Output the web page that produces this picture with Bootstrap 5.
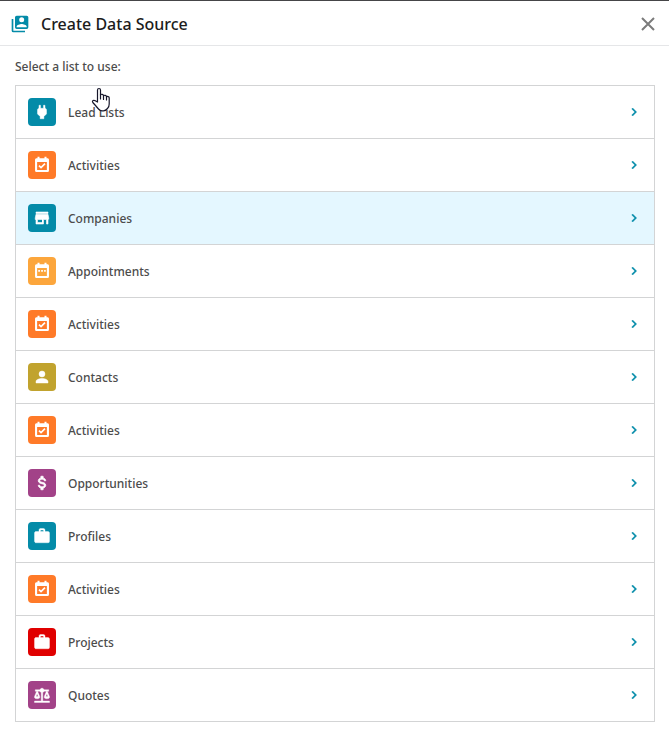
<!DOCTYPE html>
<html lang="en">
<head>
<meta charset="utf-8">
<meta name="viewport" content="width=device-width, initial-scale=1">
<title>Create Data Source</title>
<link href="https://cdn.jsdelivr.net/npm/bootstrap@5.3.0/dist/css/bootstrap.min.css" rel="stylesheet">
<style>
  body { font-family: "Noto Sans", sans-serif; font-size: 12px; font-weight: 500; line-height: 20px; color: #4c4c4c; background: #fff; }
  .dialog-head { border-top: 1px solid #454547; border-bottom: 1px solid #e5e6e8; padding: 1px 9px 0 10px; height: 46px; }
  .dialog-head h1 { font-size: 16px; line-height: 24px; font-weight: 500; color: #1c1c1c; margin-left: 11px; }
  .teal { color: #048ba8; }
  .dialog-close { width: 24px; height: 24px; color: #7b7b7b; }
  .dialog-body { padding: 11px 14px 16px 15px; }
  .source-list { --bs-list-group-border-color: #d3d4d5; --bs-list-group-border-radius: 0; margin-top: 8px; }
  .source-list .list-group-item { padding: 12px; color: #4c4c4c; font-weight: 500; }
  .source-list .list-group-item.current, .source-list .list-group-item:hover { background: #e4f7ff; }
  .source-name { padding-top: 2px; }
  .tile { width: 28px; height: 28px; border-radius: 4px; color: #fff; margin-right: 12px; }
  svg { fill: currentColor; display: block; }
  .bg-teal { background: #048ba8; }
  .bg-orange { background: #ff7a28; }
  .bg-amber { background: #fca63c; }
  .bg-olive { background: #c1a32e; }
  .bg-plum { background: #a24288; }
  .bg-scarlet { background: #e00000; }
  .hand { left: 91px; top: 87px; z-index: 5; pointer-events: none; }
</style>
<script src="https://cdn.jsdelivr.net/npm/bootstrap@5.3.0/dist/js/bootstrap.bundle.min.js"></script>
</head>
<body class="position-relative">
<svg class="d-none" aria-hidden="true">
  <symbol id="plug" viewBox="0 0 24 24"><path d="M16,7V3H14V7H10V3H8V7H8C7,7 6,8 6,9V14.5L9.500,18V21H14.500V18L18,14.500V9C18,8 17,7 16,7Z" stroke="currentColor" stroke-width=".6"/></symbol>
  <symbol id="check" viewBox="0 0 24 24"><path fill-rule="evenodd" d="M5,3H6V1H8.700V3H15.300V1H18V3H19A2,2 0 0,1 21.300,5V19A2,2 0 0,1 19,21.300H5A2,2 0 0,1 2.700,19V5A2,2 0 0,1 5,3ZM5.500,8V18.500H18.500V8Z"/><path d="M8,12.800L10.700,15.500L16,10.200" fill="none" stroke="currentColor" stroke-width="2.200"/></symbol>
  <symbol id="range" viewBox="0 0 24 24"><path fill-rule="evenodd" d="M5,3H6V1H8.700V3H15.300V1H18V3H19A2,2 0 0,1 21.300,5V19A2,2 0 0,1 19,21.300H5A2,2 0 0,1 2.700,19V5A2,2 0 0,1 5,3ZM5.500,8V18.500H18.500V8Z"/><path d="M7,10.500H9.300V13H7ZM10.900,10.500H13.200V13H10.900ZM14.800,10.500H17V13H14.800Z"/></symbol>
  <symbol id="store" viewBox="0 0 24 24"><path d="M12,18H6V14H12M21,14V12L20,7H4L3,12V14H4V20H14V14H18V20H20V14M20,4H4V6H20V4Z" stroke="currentColor" stroke-width=".8"/></symbol>
  <symbol id="person" viewBox="0 0 24 24"><path d="M12,4A4,4 0 0,1 16,8A4,4 0 0,1 12,12A4,4 0 0,1 8,8A4,4 0 0,1 12,4M12,14C16.420,14 20,15.790 20,18V20H4V18C4,15.790 7.580,14 12,14Z" stroke="currentColor" stroke-width=".6"/></symbol>
  <symbol id="dollar" viewBox="0 0 24 24"><path d="M7,15H9C9,16.080 10.370,17 12,17C13.630,17 15,16.080 15,15C15,13.900 13.960,13.500 11.760,12.970C9.640,12.440 7,11.780 7,9C7,7.210 8.470,5.690 10.500,5.180V3H13.500V5.180C15.530,5.690 17,7.210 17,9H15C15,7.920 13.630,7 12,7C10.370,7 9,7.920 9,9C9,10.100 10.040,10.500 12.240,11.030C14.360,11.560 17,12.220 17,15C17,16.790 15.530,18.310 13.500,18.820V21H10.500V18.820C8.470,18.310 7,16.790 7,15Z" stroke="currentColor" stroke-width="1"/></symbol>
  <symbol id="case" viewBox="0 0 24 24"><path d="M10,2H14A2,2 0 0,1 16,4V6H20A2,2 0 0,1 22,8V19A2,2 0 0,1 20,21H4C2.890,21 2,20.100 2,19V8C2,6.890 2.890,6 4,6H8V4C8,2.890 8.890,2 10,2M14,6V4H10V6H14Z" stroke="currentColor" stroke-width=".5"/></symbol>
  <symbol id="scales" viewBox="0 0 24 24"><path d="M12,3C10.730,3 9.600,3.800 9.180,5H3V7H4.950L2,14C1.530,16 3,17 5.500,17C8,17 9.560,16 9,14L6.050,7H9.170C9.500,7.850 10.150,8.500 11,8.830V20H2V22H22V20H13V8.820C13.850,8.500 14.500,7.850 14.820,7H17.950L15,14C14.530,16 16,17 18.500,17C21,17 22.560,16 22,14L19.050,7H21V5H14.830C14.400,3.800 13.270,3 12,3M5.500,10.250L7,14H4L5.500,10.250M18.500,10.250L20,14H17L18.500,10.250Z" stroke="currentColor" stroke-width=".5"/></symbol>
  <symbol id="chev" viewBox="0 0 24 24"><path d="M8.590,16.580L13.170,12L8.590,7.410L10,6L16,12L10,18L8.590,16.580Z" stroke="currentColor" stroke-width=".6"/></symbol>
</svg>

<header class="dialog-head d-flex align-items-center">
  <svg class="teal flex-shrink-0" width="20" height="20" viewBox="0 0 24 24" aria-hidden="true"><path d="M4,6H2V20A2,2 0 0,0 4,22H18V20H4V6M20,2A2,2 0 0,1 22,4V16A2,2 0 0,1 20,18H8A2,2 0 0,1 6,16V4A2,2 0 0,1 8,2H20M17,7A3,3 0 0,0 14,4A3,3 0 0,0 11,7A3,3 0 0,0 14,10A3,3 0 0,0 17,7M8,15V16H20V15C20,13 16,11.900 14,11.900C12,11.900 8,13 8,15Z"/></svg>
  <h1 class="mb-0 me-auto">Create Data Source</h1>
  <button type="button" class="dialog-close btn p-0 border-0" aria-label="Close"><svg width="24" height="24" viewBox="0 0 24 24"><path d="M6 6L18 18M18 6L6 18" stroke="currentColor" stroke-width="2" fill="none"/></svg></button>
</header>

<main class="dialog-body">
  <p class="mb-0" id="prompt">Select a list to use:</p>
  <div class="list-group source-list" role="group" aria-labelledby="prompt">
    <button type="button" class="list-group-item list-group-item-action d-flex align-items-center"><span class="tile bg-teal d-flex align-items-center justify-content-center"><svg width="18" height="18"><use href="#plug"/></svg></span><span class="source-name me-auto">Lead Lists</span><svg class="teal" width="16" height="16"><use href="#chev"/></svg></button>
    <button type="button" class="list-group-item list-group-item-action d-flex align-items-center"><span class="tile bg-orange d-flex align-items-center justify-content-center"><svg width="18" height="18"><use href="#check"/></svg></span><span class="source-name me-auto">Activities</span><svg class="teal" width="16" height="16"><use href="#chev"/></svg></button>
    <button type="button" class="list-group-item list-group-item-action current d-flex align-items-center"><span class="tile bg-teal d-flex align-items-center justify-content-center"><svg width="18" height="18"><use href="#store"/></svg></span><span class="source-name me-auto">Companies</span><svg class="teal" width="16" height="16"><use href="#chev"/></svg></button>
    <button type="button" class="list-group-item list-group-item-action d-flex align-items-center"><span class="tile bg-amber d-flex align-items-center justify-content-center"><svg width="18" height="18"><use href="#range"/></svg></span><span class="source-name me-auto">Appointments</span><svg class="teal" width="16" height="16"><use href="#chev"/></svg></button>
    <button type="button" class="list-group-item list-group-item-action d-flex align-items-center"><span class="tile bg-orange d-flex align-items-center justify-content-center"><svg width="18" height="18"><use href="#check"/></svg></span><span class="source-name me-auto">Activities</span><svg class="teal" width="16" height="16"><use href="#chev"/></svg></button>
    <button type="button" class="list-group-item list-group-item-action d-flex align-items-center"><span class="tile bg-olive d-flex align-items-center justify-content-center"><svg width="18" height="18"><use href="#person"/></svg></span><span class="source-name me-auto">Contacts</span><svg class="teal" width="16" height="16"><use href="#chev"/></svg></button>
    <button type="button" class="list-group-item list-group-item-action d-flex align-items-center"><span class="tile bg-orange d-flex align-items-center justify-content-center"><svg width="18" height="18"><use href="#check"/></svg></span><span class="source-name me-auto">Activities</span><svg class="teal" width="16" height="16"><use href="#chev"/></svg></button>
    <button type="button" class="list-group-item list-group-item-action d-flex align-items-center"><span class="tile bg-plum d-flex align-items-center justify-content-center"><svg width="18" height="18"><use href="#dollar"/></svg></span><span class="source-name me-auto">Opportunities</span><svg class="teal" width="16" height="16"><use href="#chev"/></svg></button>
    <button type="button" class="list-group-item list-group-item-action d-flex align-items-center"><span class="tile bg-teal d-flex align-items-center justify-content-center"><svg width="18" height="18"><use href="#case"/></svg></span><span class="source-name me-auto">Profiles</span><svg class="teal" width="16" height="16"><use href="#chev"/></svg></button>
    <button type="button" class="list-group-item list-group-item-action d-flex align-items-center"><span class="tile bg-orange d-flex align-items-center justify-content-center"><svg width="18" height="18"><use href="#check"/></svg></span><span class="source-name me-auto">Activities</span><svg class="teal" width="16" height="16"><use href="#chev"/></svg></button>
    <button type="button" class="list-group-item list-group-item-action d-flex align-items-center"><span class="tile bg-scarlet d-flex align-items-center justify-content-center"><svg width="18" height="18"><use href="#case"/></svg></span><span class="source-name me-auto">Projects</span><svg class="teal" width="16" height="16"><use href="#chev"/></svg></button>
    <button type="button" class="list-group-item list-group-item-action d-flex align-items-center"><span class="tile bg-plum d-flex align-items-center justify-content-center"><svg width="18" height="18"><use href="#scales"/></svg></span><span class="source-name me-auto">Quotes</span><svg class="teal" width="16" height="16"><use href="#chev"/></svg></button>
  </div>
</main>

<svg class="hand position-absolute" width="20" height="25" viewBox="0 0 20 25" aria-hidden="true"><path d="M6.500 15V3Q6.500 1.500 8 1.500T9.500 3V8Q10 7 11.300 7.300T12.500 9Q13 8 14.300 8.300T15.500 10Q16 9.200 17.200 9.600T18.200 11V17Q18.200 20 16.500 21.500Q14.500 23.800 12.500 23.800H11Q9 23.800 7.500 22L4.500 18.500L1.800 15.500Q1 14.300 2 13.600T4.300 13.700Z" fill="#fff" stroke="#16162a" stroke-width="1.200" stroke-linejoin="round"/><path d="M9.500 7.500V12M12.500 9V12.500M15.500 10V13" fill="none" stroke="#16162a" stroke-width="1.200" stroke-linecap="round"/></svg>
</body>
</html>
